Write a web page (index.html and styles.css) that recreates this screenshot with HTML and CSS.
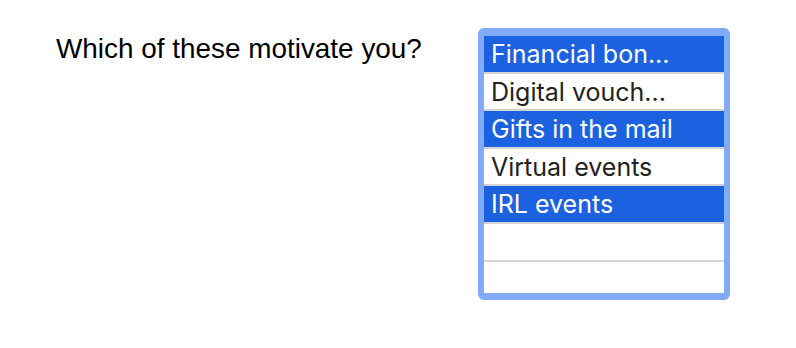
FILE: index.html
```html
<!DOCTYPE html>
<html lang="en">
<head>
<meta charset="utf-8">
<title>Motivation</title>
<link rel="stylesheet" href="styles.css">
</head>
<body>
<main class="page">
  <p class="question">Which of these motivate you?</p>
  <div class="listbox" role="listbox" aria-multiselectable="true">
    <div class="option selected" role="option" aria-selected="true">Financial bon...</div>
    <div class="option" role="option">Digital vouch...</div>
    <div class="option selected" role="option" aria-selected="true">Gifts in the mail</div>
    <div class="option" role="option">Virtual events</div>
    <div class="option selected" role="option" aria-selected="true">IRL events</div>
    <div class="option empty" role="option"></div>
    <div class="option empty" role="option"></div>
  </div>
</main>
</body>
</html>
```
FILE: styles.css
```css
html, body {
  margin: 0;
  padding: 0;
  background: #ffffff;
}

.page {
  display: flex;
  align-items: flex-start;
  padding: 28px 0 0 56px;
  width: 796px;
  height: 348px;
  box-sizing: border-box;
}

.question {
  margin: 5px 0 0 0;
  width: 422px;
  font-family: "Liberation Sans", Arial, sans-serif;
  font-size: 27.9px;
  line-height: 32px;
  color: #000000;
}

.listbox {
  width: 240px;
  height: 257px;
  border-style: solid;
  border-color: #82abf7;
  border-width: 8px 6px 7px 6px;
  border-radius: 6px;
  background: #ffffff;
  overflow: hidden;
}

.option {
  height: 37.6px;
  box-sizing: border-box;
  padding-left: 7px;
  border-bottom: 2px solid #d4d4d4;
  font-family: Inter, "Noto Sans", sans-serif;
  font-size: 25px;
  line-height: 37px;
  color: #222222;
  white-space: nowrap;
}

.option.selected {
  background: #1c62e0;
  color: #ffffff;
}
```
